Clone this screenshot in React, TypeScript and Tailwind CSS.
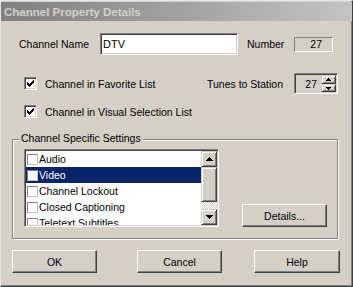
import React from "react";

const raised =
  "border border-t-white border-l-white border-r-[#404040] border-b-[#404040] shadow-[inset_-1px_-1px_#808080] bg-[#d4d0c8]";
const sunken =
  "border border-t-[#808080] border-l-[#808080] border-r-white border-b-white shadow-[inset_1px_1px_#404040,inset_-1px_-1px_#d4d0c8]";
const sbBtn =
  "border border-t-[#d4d0c8] border-l-[#d4d0c8] border-r-[#404040] border-b-[#404040] shadow-[inset_1px_1px_#ffffff,inset_-1px_-1px_#808080] bg-[#d4d0c8]";

function Check() {
  const cols = [2, 3, 4, 3, 2, 1, 0];
  return (
    <svg width="7" height="7" viewBox="0 0 7 7" shapeRendering="crispEdges">
      {cols.map((r, i) => (
        <rect key={i} x={i} y={r} width="1" height="3" fill="#000" />
      ))}
    </svg>
  );
}

function CheckBox({ checked }: { checked: boolean }) {
  return (
    <div className={`w-[13px] h-[13px] bg-white ${sunken} flex items-center justify-center shrink-0`}>
      {checked && <Check />}
    </div>
  );
}

function Arrow({ up, size }: { up: boolean; size: number }) {
  const rows = Array.from({ length: size }, (_, i) => i);
  const w = size * 2 - 1;
  return (
    <svg width={w} height={size} viewBox={`0 0 ${w} ${size}`} shapeRendering="crispEdges">
      {rows.map((i) => {
        const y = up ? i : size - 1 - i;
        return <rect key={i} x={size - 1 - i} y={y} width={i * 2 + 1} height="1" fill="#000" />;
      })}
    </svg>
  );
}

const items = ["Audio", "Video", "Channel Lockout", "Closed Captioning", "Teletext Subtitles"];

export default function App() {
  return (
    <div className="w-[353px] h-[287px] bg-[#d4d0c8] border border-t-[#e8e8e8] border-l-[#e8e8e8] border-r-[#404040] border-b-[#404040] shadow-[inset_-1px_-1px_#808080] flex flex-col font-['Liberation_Sans',Arial,sans-serif] text-[10.5px] text-black leading-[14px] overflow-hidden">
      {/* Title bar */}
      <div className="mt-[1px] h-[19px] bg-linear-to-r from-[#808080] to-[#c4c4c4] flex items-center pl-[3px] shrink-0">
        <span className="text-[#d4d0c8] font-bold text-[11.5px]">Channel Property Details</span>
      </div>

      {/* Row 1 */}
      <div className="mt-[12px] h-[22px] flex items-center shrink-0">
        <span className="ml-[18px] w-[81px]">Channel Name</span>
        <div className={`w-[138px] h-[22px] bg-white ${sunken} flex items-center pl-[2px] text-[11px]`}>DTV</div>
        <span className="ml-[9px] w-[47px]">Number</span>
        <div className="w-[39px] h-[15px] border border-t-[#808080] border-l-[#808080] border-r-white border-b-white flex items-center justify-end pr-[10px]">
          27
        </div>
      </div>

      {/* Row 2 */}
      <div className="mt-[18px] h-[21px] flex items-center shrink-0">
        <div className="ml-[23px]">
          <CheckBox checked />
        </div>
        <span className="ml-[8px]">Channel in Favorite List</span>
        <div className="flex-1" />
        <span>Tunes to Station</span>
        <div className={`ml-[11px] mr-[14px] w-[44px] h-[21px] bg-[#d4d0c8] ${sunken} p-[1px] flex`}>
          <div className="flex-1 flex items-center justify-end pr-[4px]">27</div>
          <div className="w-[15px] flex flex-col">
            <div className={`h-[9px] ${sbBtn} flex items-center justify-center`}>
              <Arrow up size={3} />
            </div>
            <div className={`h-[8px] ${sbBtn} flex items-center justify-center`}>
              <Arrow up={false} size={3} />
            </div>
          </div>
        </div>
      </div>

      {/* Row 3 */}
      <div className="mt-[10px] h-[15px] flex items-center shrink-0">
        <div className="ml-[23px]">
          <CheckBox checked />
        </div>
        <span className="ml-[8px]">Channel in Visual Selection List</span>
      </div>

      {/* Group box */}
      <div className="mt-[20px] ml-[11px] mr-[14px] h-[100px] relative border border-[#808080] shadow-[inset_1px_1px_#ffffff,1px_1px_#ffffff] shrink-0 flex items-end pl-[11px] pb-[11px]">
        <span className="absolute left-[6px] top-[-9px] px-[2px] bg-[#d4d0c8]">Channel Specific Settings</span>
        <div className={`w-[195px] h-[78px] bg-white ${sunken} p-[1px] flex`}>
          <div className="flex-1 overflow-hidden">
            {items.map((t, i) => {
              const sel = i === 1;
              return (
                <div
                  key={t}
                  className={`h-[16px] flex items-center whitespace-nowrap ${sel ? "bg-[#0a246a] text-white" : ""}`}
                >
                  <div className="ml-[1px] w-[11px] h-[11px] bg-white border border-t-[#808080] border-l-[#808080] border-r-[#c0c0c0] border-b-[#c0c0c0] shrink-0" />
                  <span className="ml-[1px]">{t}</span>
                </div>
              );
            })}
          </div>
          <div className="w-[16px] flex flex-col">
            <div className={`h-[16px] ${sbBtn} flex items-center justify-center`}>
              <Arrow up size={4} />
            </div>
            <div className={`h-[35px] ${sbBtn}`} />
            <div className="h-[7px] bg-[repeating-conic-gradient(#ffffff_0%_25%,#d4d0c8_0%_50%)] bg-[length:2px_2px]" />
            <div className={`h-[16px] ${sbBtn} flex items-center justify-center`}>
              <Arrow up={false} size={4} />
            </div>
          </div>
        </div>
        <div className={`ml-[23px] w-[85px] h-[23px] ${raised} flex items-center justify-center`}>Details...</div>
      </div>

      {/* Bottom buttons */}
      <div className="mt-[11px] flex shrink-0">
        <div className={`ml-[11px] w-[85px] h-[23px] ${raised} flex items-center justify-center`}>OK</div>
        <div className={`ml-[40px] w-[85px] h-[23px] ${raised} flex items-center justify-center`}>Cancel</div>
        <div className={`ml-[32px] w-[86px] h-[23px] ${raised} flex items-center justify-center`}>Help</div>
      </div>
    </div>
  );
}
